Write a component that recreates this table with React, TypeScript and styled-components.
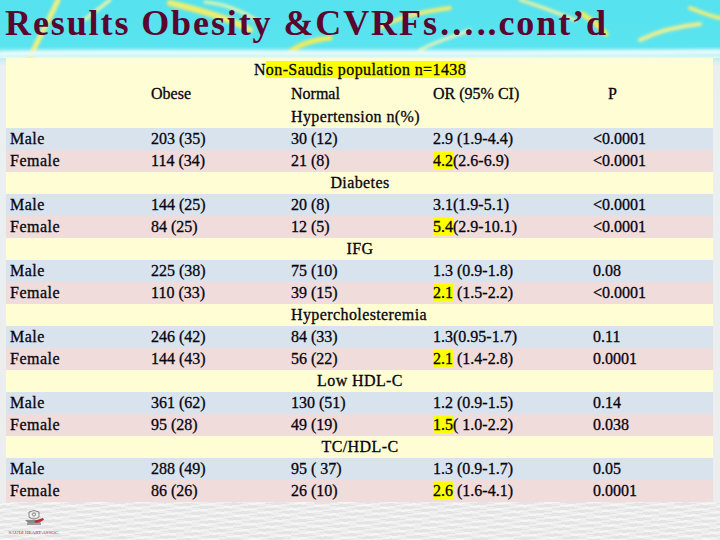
import React from "react";
import styled, { createGlobalStyle } from "styled-components";

const SERIF = `"Liberation Serif", "Times New Roman", serif`;

const Global = createGlobalStyle`
  html, body { margin: 0; padding: 0; }
  body {
    width: 720px;
    height: 540px;
    overflow: hidden;
    background: #ebebeb;
    font-family: ${SERIF};
  }
  #root, #root * {
    font-family: ${SERIF};
  }
`;

const Page = styled.div`
  width: 720px;
  height: 540px;
  display: flex;
  flex-direction: column;
  background:
    repeating-linear-gradient(173deg, rgba(255,255,255,0.35) 0 2px, rgba(0,0,0,0.015) 2px 5px),
    repeating-linear-gradient(8deg, rgba(255,255,255,0.25) 0 3px, rgba(0,0,0,0.02) 3px 7px),
    #ececec;
`;

const TitleBar = styled.header`
  position: relative;
  height: 58px;
  flex: none;
  overflow: hidden;
  background: linear-gradient(180deg, #55e1ee 0%, #5ae4f0 80%, #bff3f6 96%, #eef8f8 100%);
`;

const TitleArt = styled.svg`
  position: absolute;
  inset: 0;
`;

const Title = styled.h1`
  position: relative;
  margin: 0;
  padding: 3px 0 0 5px;
  font-weight: bold;
  font-size: 36px;
  line-height: 40px;
  letter-spacing: 1.9px;
  color: #5a062e;
  white-space: nowrap;
`;

const Body = styled.div`
  display: flex;
  flex: none;
`;

const SideStrip = styled.div<{ $w: number }>`
  width: ${(p) => p.$w}px;
  flex: none;
  background: linear-gradient(180deg, #bfeef3 0px, #eaf0f0 8px, #ededed 100%);
`;

const Table = styled.div`
  width: 707px;
  flex: none;
  display: flex;
  flex-direction: column;
  font-size: 16px;
  color: #05050f;
  -webkit-text-stroke: 0.3px #05050f;
`;

const COLS = "145px 140px 141px 161px 120px";

const tones = {
  yellow: "#fffdd3",
  blue: "#d9e3ee",
  pink: "#f1dcdc",
};

const Row = styled.div<{ $tone: keyof typeof tones; $h: number }>`
  display: grid;
  grid-template-columns: ${COLS};
  height: ${(p) => p.$h}px;
  line-height: ${(p) => p.$h}px;
  background: ${(p) => tones[p.$tone]};
  white-space: nowrap;
`;

const Cell = styled.div<{ $pad?: number }>`
  padding-left: ${(p) => p.$pad ?? 0}px;
`;

const LabelCell = styled.div`
  padding-left: 4px;
  letter-spacing: 0.5px;
`;

const SpanCell = styled.div<{ $left?: boolean }>`
  grid-column: 2 / 5;
  text-align: ${(p) => (p.$left ? "left" : "center")};
  padding-left: ${(p) => (p.$left ? 140 : 0)}px;
  padding-right: ${(p) => (p.$left ? 0 : 24)}px;
  letter-spacing: 0.4px;
`;

const Mark = styled.span`
  background: #ffff00;
`;

const Footer = styled.footer`
  flex: 1;
  display: flex;
  align-items: flex-start;
  padding: 6px 0 0 8px;
`;

type Item = {
  name: string;
  left?: boolean;
  rows: [string, string, string, string, string, string][];
};

const data: Item[] = [
  {
    name: "Hypertension n(%)",
    left: true,
    rows: [
      ["Male", "203 (35)", "30 (12)", "", "2.9 (1.9-4.4)", "<0.0001"],
      ["Female", "114 (34)", "21 (8)", "4.2", "(2.6-6.9)", "<0.0001"],
    ],
  },
  {
    name: "Diabetes",
    rows: [
      ["Male", "144 (25)", "20 (8)", "", "3.1(1.9-5.1)", "<0.0001"],
      ["Female", "84 (25)", "12 (5)", "5.4", "(2.9-10.1)", "<0.0001"],
    ],
  },
  {
    name: "IFG",
    rows: [
      ["Male", "225 (38)", "75 (10)", "", "1.3 (0.9-1.8)", "0.08"],
      ["Female", "110 (33)", "39 (15)", "2.1", " (1.5-2.2)", "<0.0001"],
    ],
  },
  {
    name: "Hypercholesteremia",
    left: true,
    rows: [
      ["Male", "246 (42)", "84 (33)", "", "1.3(0.95-1.7)", "0.11"],
      ["Female", "144 (43)", "56 (22)", "2.1", " (1.4-2.8)", "0.0001"],
    ],
  },
  {
    name: "Low HDL-C",
    rows: [
      ["Male", "361 (62)", "130 (51)", "", "1.2 (0.9-1.5)", "0.14"],
      ["Female", "95 (28)", "49 (19)", "1.5", "( 1.0-2.2)", "0.038"],
    ],
  },
  {
    name: "TC/HDL-C",
    rows: [
      ["Male", "288 (49)", "95 ( 37)", "", "1.3 (0.9-1.7)", "0.05"],
      ["Female", "86 (26)", "26 (10)", "2.6", " (1.6-4.1)", "0.0001"],
    ],
  },
];

function Logo() {
  return (
    <svg width="52" height="30" viewBox="0 0 52 30">
      <g fill="none" stroke="#6a6a6a" strokeWidth="0.8">
        <path d="M21 4 q5 -3 10 0 v5 q-5 4 -10 0 z" />
        <circle cx="26" cy="6.5" r="1.6" />
      </g>
      <path d="M17 12 h18 l-3 3 h-12 z" fill="#8a8a8a" />
      <path d="M26 13 l9 -3 l1 2 l-8 3 z" fill="#c0283a" />
      <path d="M19 16 h14" stroke="#555" strokeWidth="1" />
      <text x="26" y="26" textAnchor="middle" fontSize="5" fill="#c0283a">
        SAUDI HEART ASSOC.
      </text>
    </svg>
  );
}

export default function App() {
  return (
    <>
      <Global />
      <Page>
        <TitleBar>
          <TitleArt width="720" height="58" viewBox="0 0 720 58">
            <defs>
              <filter id="blur" x="-20%" y="-20%" width="140%" height="140%">
                <feGaussianBlur stdDeviation="1.6" />
              </filter>
            </defs>
            <g filter="url(#blur)" fill="none" strokeLinecap="round">
              <path d="M58 0 C50 18 40 35 30 58" stroke="#f4f07a" strokeWidth="5" />
              <path d="M110 0 C100 8 92 14 84 20" stroke="#f8f6a0" strokeWidth="3" />
              <path d="M170 3 C200 10 230 18 250 30" stroke="#f2ee6a" strokeWidth="6" />
              <path d="M205 2 C225 4 240 10 260 22" stroke="#e8f7a8" strokeWidth="3" />
              <path d="M290 52 C300 44 312 40 330 38" stroke="#f2ec5a" strokeWidth="5" />
              <path d="M380 28 C395 18 420 12 450 8" stroke="#f4ee6c" strokeWidth="4" />
              <path d="M420 50 C440 40 455 36 470 30" stroke="#f0f5b0" strokeWidth="3" />
              <path d="M520 0 C540 6 560 14 575 20" stroke="#f6f29a" strokeWidth="3" />
              <path d="M582 14 C592 20 600 26 606 34" stroke="#f2ea5a" strokeWidth="5" />
              <path d="M640 40 C660 30 680 26 700 24" stroke="#f6f088" strokeWidth="4" />
              <path d="M690 8 C700 12 710 16 720 18" stroke="#f3ef78" strokeWidth="4" />
              <path d="M0 54 C120 50 300 56 720 52" stroke="#e8fafa" strokeWidth="5" />
            </g>
          </TitleArt>
          <Title>Results Obesity &amp;CVRFs…..cont’d</Title>
        </TitleBar>
        <Body>
          <SideStrip $w={6} />
          <Table>
            <Row $tone="yellow" $h={24}>
              <SpanCell>
                N<Mark>on-Saudis population n=1438</Mark>
              </SpanCell>
            </Row>
            <Row $tone="yellow" $h={23}>
              <LabelCell />
              <Cell>Obese</Cell>
              <Cell>Normal</Cell>
              <Cell $pad={1}>OR (95% CI)</Cell>
              <Cell $pad={15}>P</Cell>
            </Row>
            {data.map((item, i) => (
              <React.Fragment key={item.name}>
                <Row $tone="yellow" $h={i === 0 ? 23 : 22}>
                  <SpanCell $left={item.left}>{item.name}</SpanCell>
                </Row>
                {item.rows.map((r, j) => (
                  <Row key={r[0]} $tone={j === 0 ? "blue" : "pink"} $h={22}>
                    <LabelCell>{r[0]}</LabelCell>
                    <Cell>{r[1]}</Cell>
                    <Cell>{r[2]}</Cell>
                    <Cell $pad={1}>
                      {r[3] && <Mark>{r[3]}</Mark>}
                      {r[4]}
                    </Cell>
                    <Cell>{r[5]}</Cell>
                  </Row>
                ))}
              </React.Fragment>
            ))}
          </Table>
          <SideStrip $w={7} />
        </Body>
        <Footer>
          <Logo />
        </Footer>
      </Page>
    </>
  );
}
